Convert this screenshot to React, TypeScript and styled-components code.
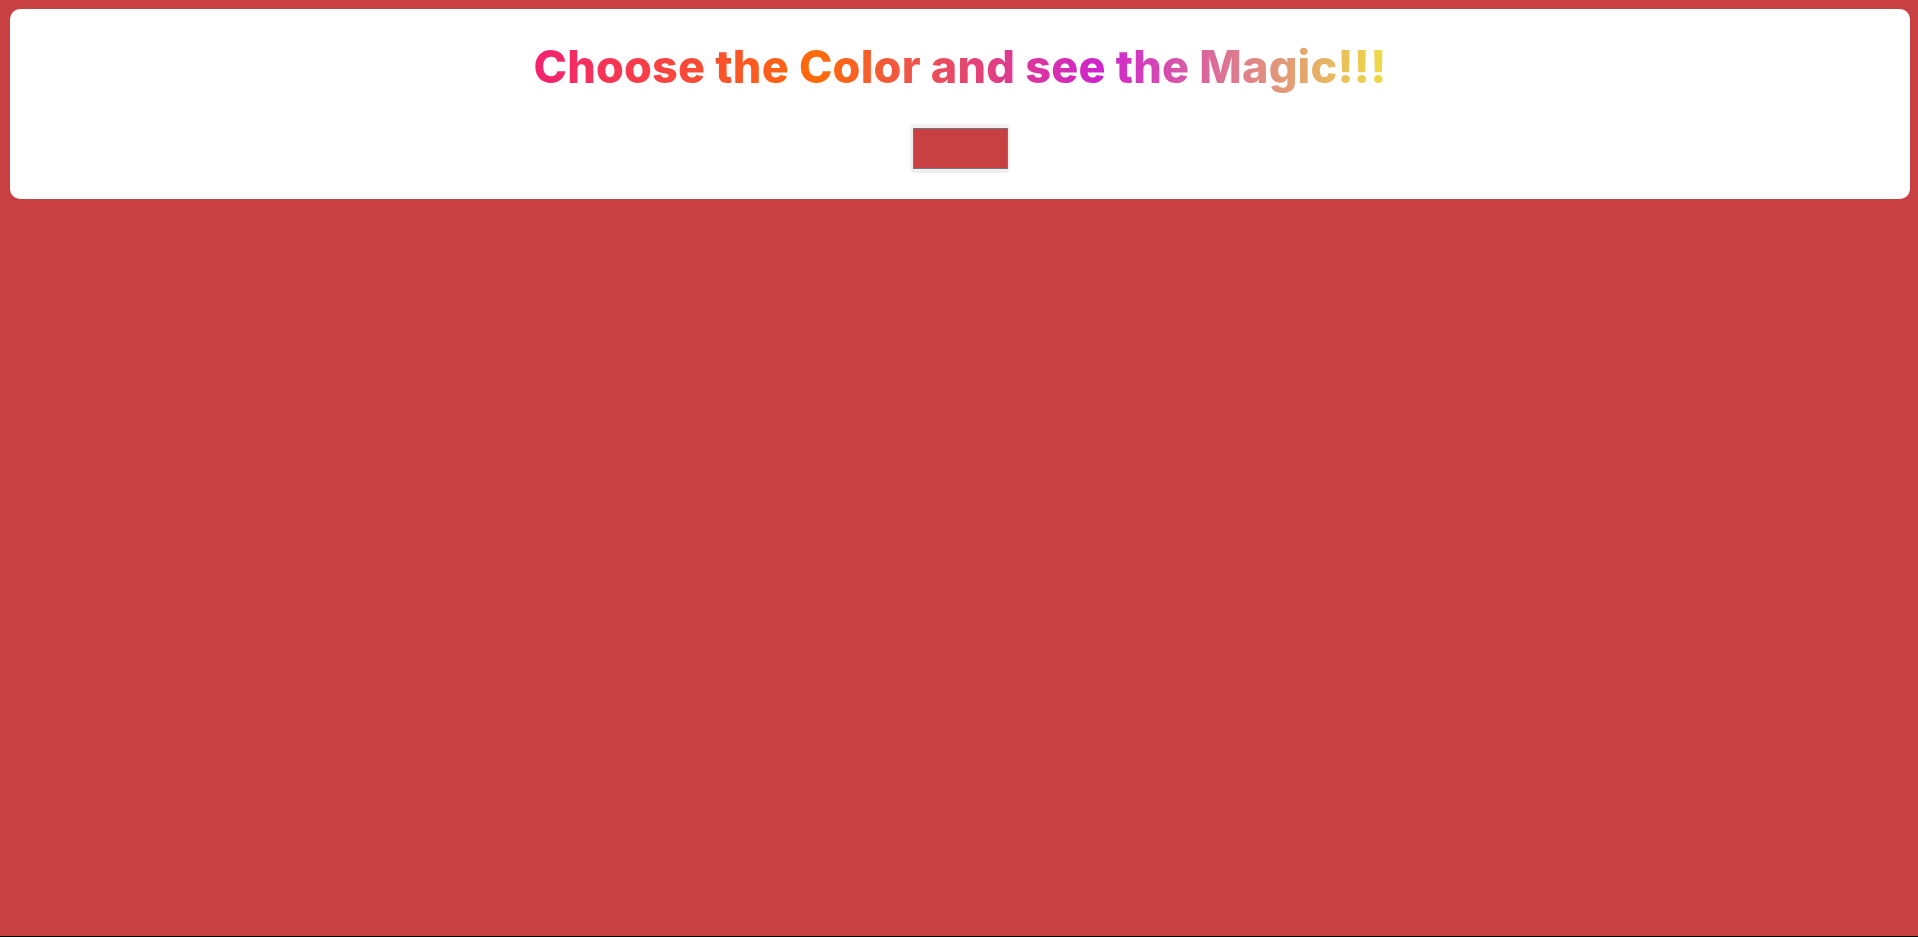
import React, { useState } from "react";
import styled, { createGlobalStyle } from "styled-components";

const Global = createGlobalStyle`
  html { background: #000; }
  body { margin: 0; }
  * { box-sizing: border-box; }
`;

const Page = styled.div<{ $bg: string }>`
  height: 936px;
  background: ${(p) => p.$bg};
  padding: 9px 8px 0 10px;
  font-family: "Inter", "Liberation Sans", sans-serif;
`;

const Card = styled.div`
  background: #fff;
  border-radius: 10px;
  height: 190px;
  display: flex;
  flex-direction: column;
  align-items: center;
  padding-top: 31px;
`;

const Title = styled.h1`
  margin: 0;
  font-size: 45px;
  font-weight: 800;
  line-height: 54px;
  letter-spacing: 0.2px;
  background-image: linear-gradient(to right, #f32170, #ff6b08, #cf23cf, #eedd44);
  -webkit-background-clip: text;
  background-clip: text;
  color: transparent;
`;

const Picker = styled.input`
  margin-top: 30px;
  width: 100px;
  height: 49px;
  border: none;
  border-radius: 6px;
  background: #efefef;
  padding: 4px 2px 4px 3px;
  cursor: pointer;
  &::-webkit-color-swatch-wrapper {
    padding: 0;
  }
  &::-webkit-color-swatch {
    border: 1px solid #6b7b7d;
    border-radius: 0;
  }
`;

export default function App() {
  const [color, setColor] = useState("#c84042");
  return (
    <>
      <Global />
      <Page $bg={color}>
        <Card>
          <Title>Choose the Color and see the Magic!!!</Title>
          <Picker type="color" value={color} onChange={(e) => setColor(e.target.value)} />
        </Card>
      </Page>
    </>
  );
}
